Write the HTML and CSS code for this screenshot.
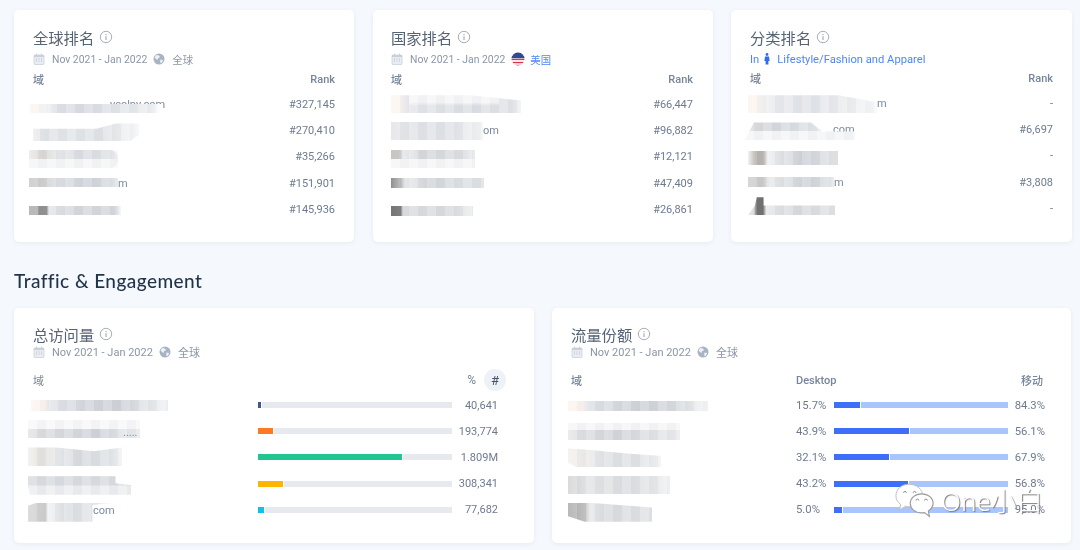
FILE: index.html
```html
<!DOCTYPE html>
<html lang="zh">
<head>
<meta charset="utf-8">
<title>Traffic &amp; Engagement</title>
<link rel="stylesheet" href="styles.css">
</head>
<body>
<svg class="defs" width="0" height="0">
  <symbol id="info" viewBox="0 0 14 14"><circle cx="7" cy="7" r="5.7" fill="none" stroke="currentColor" stroke-width="1"/><rect x="6.4" y="6.2" width="1.2" height="3.8" fill="currentColor"/><rect x="6.4" y="4" width="1.2" height="1.2" fill="currentColor"/></symbol>
  <symbol id="cal" viewBox="0 0 12 12"><rect x="1" y="2" width="10" height="9.5" rx="1" fill="#e9edf2" stroke="#c9d0da" stroke-width=".8"/><rect x="1" y="2" width="10" height="2" fill="#c9d0da"/><rect x="3" y=".6" width="1" height="2.2" fill="#c9d0da"/><rect x="8" y=".6" width="1" height="2.2" fill="#c9d0da"/><path d="M3 6h1M5.5 6h1M8 6h1M3 8h1M5.5 8h1M8 8h1" stroke="#b9c2ce" stroke-width="1"/></symbol>
  <symbol id="globe" viewBox="0 0 12 12"><circle cx="6" cy="6" r="5.5" fill="#a9b4c2"/><path d="M3 2l3 .6 1 1.6-2 1-.4 1.8-1.6-1L1.6 4.6zM7.5 6.5l2.600.5-1 2.600-1.500.6-.5-2z" fill="#eef1f5"/></symbol>
  <symbol id="flag" viewBox="0 0 14 14"><clipPath id="fc"><circle cx="7" cy="7" r="6.500"/></clipPath><g clip-path="url(#fc)"><rect width="14" height="14" fill="#fff"/><path d="M0 1.500h14M0 4.500h14M0 7.500h14M0 10.500h14M0 13.500h14" stroke="#d8344a" stroke-width="1.500"/><rect width="14" height="6.200" fill="#2f4a8f"/><path d="M0 9h14" stroke="#fff" stroke-width="1.200"/></g></symbol>
  <symbol id="person" viewBox="0 0 6 12"><circle cx="3" cy="1.500" r="1.400" fill="#2f6bf2"/><path d="M1 3.500h4l.6 4.500H4.400v3.500H1.600V8H.4z" fill="#2f6bf2"/></symbol>
</svg>

<main class="page">
  <section class="grid-three">
    <article class="card rank-card">
      <h3 class="title">全球排名<svg class="info"><use href="#info"/></svg></h3>
      <p class="meta"><svg class="ic"><use href="#cal"/></svg><span>Nov 2021 - Jan 2022</span><svg class="ic"><use href="#globe"/></svg><span>全球</span></p>
      <div class="head rank-row"><span>域</span><span>Rank</span></div>
      <div class="rank-row"><span class="dom"><span class="tail t-a1">ycolpy.com</span><i class="blur a1"></i></span><span>#327,145</span></div>
      <div class="rank-row"><span class="dom"><span class="tail t-a2">m</span><i class="blur a2"></i></span><span>#270,410</span></div>
      <div class="rank-row"><span class="dom"><i class="blur a3"></i></span><span>#35,266</span></div>
      <div class="rank-row"><span class="dom"><span class="tail t-a4">m</span><i class="blur a4"></i></span><span>#151,901</span></div>
      <div class="rank-row"><span class="dom"><i class="blur a5"></i></span><span>#145,936</span></div>
    </article>

    <article class="card rank-card">
      <h3 class="title">国家排名<svg class="info"><use href="#info"/></svg></h3>
      <p class="meta"><svg class="ic"><use href="#cal"/></svg><span>Nov 2021 - Jan 2022</span><svg class="ic flagic"><use href="#flag"/></svg><span class="link">美国</span></p>
      <div class="head rank-row"><span>域</span><span>Rank</span></div>
      <div class="rank-row"><span class="dom"><i class="blur b1"></i></span><span>#66,447</span></div>
      <div class="rank-row"><span class="dom"><span class="tail t-b2">om</span><i class="blur b2"></i></span><span>#96,882</span></div>
      <div class="rank-row"><span class="dom"><i class="blur b3"></i></span><span>#12,121</span></div>
      <div class="rank-row"><span class="dom"><i class="blur b4"></i></span><span>#47,409</span></div>
      <div class="rank-row"><span class="dom"><i class="blur b5"></i></span><span>#26,861</span></div>
    </article>

    <article class="card rank-card shifted">
      <h3 class="title">分类排名<svg class="info"><use href="#info"/></svg></h3>
      <p class="meta link"><span>In</span><svg class="person"><use href="#person"/></svg><span>Lifestyle/Fashion and Apparel</span></p>
      <div class="head rank-row"><span>域</span><span>Rank</span></div>
      <div class="rank-row"><span class="dom"><span class="tail t-c1">m</span><i class="blur c1"></i></span><span>-</span></div>
      <div class="rank-row"><span class="dom"><span class="tail t-c2">.com</span><i class="blur c2"></i></span><span>#6,697</span></div>
      <div class="rank-row"><span class="dom"><i class="blur c3"></i></span><span>-</span></div>
      <div class="rank-row"><span class="dom"><span class="tail t-c4">m</span><i class="blur c4"></i></span><span>#3,808</span></div>
      <div class="rank-row"><span class="dom"><i class="blur c5"></i></span><span>-</span></div>
    </article>
  </section>

  <h2 class="section-title">Traffic &amp; Engagement</h2>

  <section class="grid-two">
    <article class="card bar-card visits">
      <h3 class="title">总访问量<svg class="info"><use href="#info"/></svg></h3>
      <p class="meta"><svg class="ic"><use href="#cal"/></svg><span>Nov 2021 - Jan 2022</span><svg class="ic"><use href="#globe"/></svg><span>全球</span></p>
      <div class="head visit-head"><span>域</span><span class="pct-toggle">%</span><span class="hash">#</span></div>
      <div class="visit-row"><span class="dom"><i class="blur d1"></i></span><span class="track"><b class="fill navy" style="width:2%"></b></span><span class="num">40,641</span></div>
      <div class="visit-row"><span class="dom"><i class="blur d2"></i><span class="tail t-d2">.....</span></span><span class="track"><b class="fill orange" style="width:8.500%"></b></span><span class="num">193,774</span></div>
      <div class="visit-row"><span class="dom"><i class="blur d3"></i></span><span class="track"><b class="fill green" style="width:74.700%"></b></span><span class="num">1.809M</span></div>
      <div class="visit-row"><span class="dom"><i class="blur d4"></i></span><span class="track"><b class="fill yellow" style="width:13.300%"></b></span><span class="num">308,341</span></div>
      <div class="visit-row"><span class="dom"><span class="tail t-d5">.com</span><i class="blur d5"></i></span><span class="track"><b class="fill cyan" style="width:3.500%"></b></span><span class="num">77,682</span></div>
    </article>

    <article class="card bar-card share">
      <h3 class="title">流量份额<svg class="info"><use href="#info"/></svg></h3>
      <p class="meta"><svg class="ic"><use href="#cal"/></svg><span>Nov 2021 - Jan 2022</span><svg class="ic"><use href="#globe"/></svg><span>全球</span></p>
      <div class="head share-row share-head"><span>域</span><span class="desk">Desktop</span><span class="mob">移动</span></div>
      <div class="share-row"><span class="dom"><i class="blur e1"></i></span><span>15.7%</span><span class="split"><b class="fill blue" style="width:15.700%"></b></span><span class="num">84.3%</span></div>
      <div class="share-row"><span class="dom"><i class="blur e2"></i></span><span>43.9%</span><span class="split"><b class="fill blue" style="width:43.900%"></b></span><span class="num">56.1%</span></div>
      <div class="share-row"><span class="dom"><i class="blur e3"></i></span><span>32.1%</span><span class="split"><b class="fill blue" style="width:32.100%"></b></span><span class="num">67.9%</span></div>
      <div class="share-row"><span class="dom"><i class="blur e4"></i></span><span>43.2%</span><span class="split"><b class="fill blue" style="width:43.200%"></b></span><span class="num">56.8%</span></div>
      <div class="share-row"><span class="dom"><i class="blur e5"></i></span><span>5.0%</span><span class="split"><b class="fill blue" style="width:5%"></b></span><span class="num">95.0%</span></div>
    </article>
  </section>
</main>

<div class="watermark">
  <svg class="wm-icon" viewBox="0 0 44 38">
    <path d="M16 2C8 2 2 7 2 14c0 4 2 7 5 9l-1 6 6-4c1 .3 3 .5 4 .5 8 0 14-5 14-11.500S24 2 16 2z" fill="#fff" stroke="#bdbdbd" stroke-width="1"/>
    <path d="M29 12c-7 0-12 4.500-12 10s5 10 12 10c1 0 2 0 3-.3l5 4-1-5.700c3-2 5-4.500 5-8 0-5.500-5-10-12-10z" fill="#fff" stroke="#9c9c9c" stroke-width="1.200"/>
    <path d="M10 11a1.500 1.500 0 0 1 3 0M20 11a1.500 1.500 0 0 1 3 0M23 19a1.500 1.500 0 0 1 3 0M32 19a1.500 1.500 0 0 1 3 0" fill="none" stroke="#8a8a8a" stroke-width="1"/>
  </svg>
  <span class="wm-text">One小白</span>
</div>
</body>
</html>
```

FILE: styles.css
```css
* { box-sizing: border-box; }
html, body { margin: 0; height: 100%; }
body {
  width: 1080px;
  height: 550px;
  overflow: hidden;
  position: relative;
  background: #f5f8fd;
  font-family: Roboto, "Noto Sans CJK SC", sans-serif;
  font-size: 11px;
  color: #6d7b90;
  filter: blur(0.35px);
}
.defs { position: absolute; }
.page { padding: 10px 9px 0 14px; }

.grid-three { display: grid; grid-template-columns: 340px 340px 340px; column-gap: 19px; }
.grid-two { display: grid; grid-template-columns: 520px 519px; column-gap: 18px; }
.grid-three .card:last-child { margin-left: -1px; }
.grid-three .card:nth-child(2) { padding-left: 18px; padding-right: 20px; }

.card {
  background: #fff;
  border-radius: 5px;
  box-shadow: 0 1px 4px rgba(60, 80, 120, .08);
}
.rank-card { height: 232px; padding: 17px 19px 0; }
.bar-card { height: 235px; padding: 16px 19px 0; }
.visits { padding-right: 28px; }
.share { padding-right: 26px; }

.title {
  margin: 0;
  height: 22px;
  padding-bottom: 2px;
  display: flex;
  align-items: center;
  font: 400 15.300px/20px "Noto Sans CJK SC", sans-serif;
  color: #566375;
}
.info { width: 14px; height: 14px; margin-left: 5px; color: #a9afb8; }

.meta {
  margin: 2px 0 0;
  height: 16px;
  display: flex;
  align-items: center;
  color: #8a96a8;
  font-size: 10.400px;
  white-space: nowrap;
}
.bar-card .meta { margin-top: -2px; font-size: 11px; }
.ic { width: 12px; height: 12px; margin-right: 7px; flex: none; }
.meta span + .ic { margin-left: 6px; }
.flagic { width: 14px; height: 14px; margin-right: 5px; }
.link { color: #4f86f7; }
.meta.link { color: #4f86f7; font-size: 11.200px; }
.person { width: 6px; height: 12px; margin: 0 7px 0 5px; }

.rank-row {
  display: flex;
  justify-content: space-between;
  align-items: center;
  height: 26.300px;
  font-size: 11px;
}
.head { color: #76859a; font-weight: 500; font-size: 11px; }
.rank-row.head { height: 16px; margin: 4px 0 4px; }
.shifted .rank-row.head { margin: 3px 0 4px; }

/* zero-height anchor on the row's centre line: masks and tails hang off it */
.dom { position: relative; display: block; width: 140px; height: 0; }
.blur { position: absolute; display: block; filter: blur(.5px); }
.blur::after {
  content: "";
  position: absolute;
  inset: 0;
  background: repeating-linear-gradient(90deg, rgba(255, 255, 255, .16) 0 9px, rgba(120, 130, 145, .04) 9px 18px);
}
.tail { position: absolute; top: 0; transform: translateY(-50%); color: #7c8a9d; white-space: nowrap; }
.t-a1 { left: 77px; }
.t-a2 { left: 96px; top: 2px; }

/* Pixelated privacy masks over the domain names */
.a1 { left: -3px; top: -4px; width: 132px; height: 13px; background: linear-gradient(90deg, #fdf4ee, #f7f7f8 16px, #dfe2e7 24px, #d9dce2 55px, #e1e4e8 85px, #eceef1 120px, #fff); clip-path: polygon(0 30%, 100% 30%, 100% 100%, 0 100%); }
.a2 { left: -2px; top: -7px; width: 109px; height: 18px; background: linear-gradient(90deg, #eeeeef, #e2e3e6 15px, #e3e6ea 40px, #dfe2e6 70px, #f2f3f5 100px, #fff); clip-path: polygon(2% 30%, 60% 30%, 78% 0, 100% 0, 100% 60%, 90% 100%, 2% 100%); }
.a3 { left: -4px; top: -7px; width: 89px; height: 18px; background: linear-gradient(#0000 50%, #f5f6f7 50%), linear-gradient(90deg, #ece9e7, #d9d7d4 14px, #e6e8ea 30px, #dadde2 50px, #dfe2e6 80px, #f3f4f5); border-radius: 0 8px 8px 0; }
.a4 { left: -4px; top: -5px; width: 89px; height: 9px; background: linear-gradient(90deg, #c9c9c9, #cfcfcf 14px, #dcdfe4 30px, #cfd4db 60px, #d8dbe0 80px, #eef0f2); }
.t-a4 { left: 85px; }
.a5 { left: -4px; top: -3px; width: 92px; height: 9px; background: linear-gradient(90deg, #acacac, #acacac 9px, #8f8f8f 10px, #929292 18px, #e4e6e9 20px, #d5d8dd 45px, #d4d7dc 85px, #f5f6f7); }

.b1 { left: 0; top: -9px; width: 130px; height: 18px; background: linear-gradient(#f6f6f7 40%, #0000 60%) 18px 0 / 90px 100% no-repeat, linear-gradient(90deg, #fdf4ee, #fbf5f1 8px, #e4e6ea 20px, #dcdfe4 80px, #e2e4e8 120px, #f0f1f3); clip-path: polygon(0 0, 60% 0, 100% 30%, 100% 100%, 0 100%); }
.b2 { left: 0; top: -8px; width: 92px; height: 18px; background: linear-gradient(90deg, #e3e3e4, #e6e7e9 9px, #e1e3e7 30px, #e0e3e7 60px, #f4f5f6); }
.t-b2 { left: 92px; }
.b3 { left: 0; top: -7px; width: 84px; height: 18px; background: linear-gradient(#0000 50%, #f6f6f7 50%), linear-gradient(90deg, #bdbbb9, #bdbbb9 8px, #eeeff1 12px, #d5d8dc 30px, #dcdfe2 75px, #eff0f2); }
.b4 { left: 0; top: -5px; width: 93px; height: 10px; background: linear-gradient(90deg, #7b7b7b, #a9a9a9 8px, #e9eaec 14px, #d2d5da 40px, #dde0e4 70px, #dfe1e4); }
.b5 { left: 0; top: -3px; width: 82px; height: 10px; background: linear-gradient(90deg, #5a5a5a, #666 9px, #dcdde0 12px, #d9dbdf 60px, #ecedef); }

.c1 { left: -2px; top: -8px; width: 129px; height: 18px; background: linear-gradient(90deg, #fdf5ef, #f8f4f1 12px, #e9ebee 25px, #e1e4e8 60px, #eceef0 100px, #f8f8f9); clip-path: polygon(0 0, 70% 0, 100% 40%, 100% 100%, 0 100%); }
.t-c1 { left: 127px; }
.c2 { left: -5px; top: -7px; width: 110px; height: 18px; background: linear-gradient(#0000 50%, #f5f6f7 50%), linear-gradient(90deg, #e2e2e3, #d9d9da 15px, #d5d8dd 30px, #dfe2e6 65px, #f0f1f3); clip-path: polygon(8% 0, 60% 0, 70% 50%, 100% 50%, 100% 100%, 0 100%); }
.t-c2 { left: 80px; }
.c3 { left: -2px; top: -5px; width: 90px; height: 14px; background: linear-gradient(90deg, #f0efee, #b7b3ae 7px, #b9b5b1 15px, #eeeff0 20px, #ced1d6 55px, #e1e3e6 85px); }
.c4 { left: -2px; top: -5px; width: 86px; height: 10px; background: linear-gradient(90deg, #cfcfcf, #c9c9c9 14px, #e8e9eb 22px, #cfd3d8 60px, #dcdfe2 80px, #f0f1f2); }
.t-c4 { left: 84px; }
.c5 { left: -2px; top: -11px; width: 87px; height: 18px; background: linear-gradient(90deg, #e5e5e5, #d5d5d5 6px, #727272 8px, #6f6f6f 15px, #e6e7e9 18px, #d7dade 50px, #e0e2e5 85px); clip-path: polygon(8% 45%, 10% 0, 18% 0, 18% 45%, 100% 45%, 100% 100%, 0 100%); }

.visit-head { display: flex; align-items: center; height: 22px; margin: 9px 0 1px 0; font-weight: 400; }
.visit-head > span:first-child { flex: 1; }
.pct-toggle { font-size: 12px; margin-right: 8px; color: #76859a; }
.hash {
  width: 22px;
  height: 22px;
  border-radius: 50%;
  background: #eef2f7;
  display: flex;
  align-items: center;
  justify-content: center;
  color: #45546b;
  font-size: 13px;
}
.visit-row { display: grid; grid-template-columns: 225px 194px 46px; align-items: center; height: 26.200px; font-size: 11px; }
.num { text-align: right; }
.track { display: block; height: 6px; background: #e6e9ee; }
.split { display: block; height: 6px; background: #a8c5fc; }
.fill { display: block; height: 100%; border-right: 1px solid #fff; }
.navy { background: #3f5597; }
.orange { background: #fd7a23; }
.green { background: #1fc690; }
.yellow { background: #ffb400; }
.cyan { background: #12bfe5; }
.blue { background: #3d6ffb; }

.d1 { left: -2px; top: -5px; width: 137px; height: 11px; background: linear-gradient(90deg, #fdf5f0, #fbf3ee 14px, #e2e4e9 20px, #d2d5db 60px, #cfd2d8 90px, #dfe1e5 110px, #f1f2f4); }
.d2 { left: -5px; top: -11px; width: 112px; height: 18px; background: linear-gradient(#f8f8f9 50%, #0000 50%), linear-gradient(90deg, #e5e5e6, #dcdcde 12px, #d5d8dd 50px, #cfd3d9 70px, #e6e8eb 100px, #e9eaec); }
.t-d2 { left: 90px; top: 1px; }
.d3 { left: -5px; top: -10px; width: 94px; height: 19px; background: linear-gradient(90deg, #f2efed, #e5e2df 12px, #e8e9eb 30px, #d8dbdf 50px, #dfe2e5 80px, #f2f3f4); clip-path: polygon(0 0, 30% 0, 70% 20%, 100% 0, 100% 100%, 0 100%); }
.d4 { left: -5px; top: -8px; width: 103px; height: 19px; background: linear-gradient(#0000 0, #d9dce0 1px, #d9dce0 45%, #eceef0 55%), linear-gradient(90deg, #e4e4e4, #e7e8ea 30px, #dde0e4 50px, #eceef0 100px); clip-path: polygon(0 0, 85% 0, 85% 40%, 100% 50%, 100% 100%, 2% 100%, 0 60%); }
.d5 { left: -5px; top: -7px; width: 87px; height: 19px; background: linear-gradient(90deg, #d5d5d5, #cdcdcd 18px, #f1f2f3 20px, #dcdfe3 40px, #e2e4e7 60px, #f7f7f8); clip-path: polygon(0 15%, 10% 0, 100% 0, 74% 12%, 74% 100%, 0 100%); }
.t-d5 { left: 57px; }

.share-row { display: grid; grid-template-columns: 225px 38px 174px 37px; align-items: center; height: 26.200px; font-size: 11.300px; }
.share-row.share-head { height: 22px; margin: 9px 0 1px; font-size: 11px; font-weight: 500; }
.desk { grid-column: 2 / 4; }
.mob { justify-self: end; margin-right: 2px; }

.e1 { left: -3px; top: -4px; width: 140px; height: 10px; background: linear-gradient(90deg, #fdf4ee, #faf2ee 16px, #dfe2e6 20px, #cfd2d7 75px, #d8dbdf 110px, #f5f6f7); }
.e2 { left: -3px; top: -8px; width: 112px; height: 17px; background: linear-gradient(#f6f6f7 40%, #0000 40%), linear-gradient(90deg, #e8e8e9, #dedfe1 12px, #d2d5da 50px, #e2e4e7 90px, #eaebed); }
.e3 { left: -3px; top: -9px; width: 93px; height: 19px; background: linear-gradient(90deg, #f3f1ef, #ecebea 20px, #dfe2e5 40px, #e0e2e5 70px, #f2f3f4); clip-path: polygon(0 0, 25% 8%, 60% 25%, 100% 40%, 100% 100%, 10% 100%, 0 75%); }
.e4 { left: -3px; top: -8px; width: 102px; height: 18px; background: linear-gradient(90deg, #d3d3d3, #e4e5e6 18px, #dcdee1 60px, #e8e9eb 90px, #f3f4f5); }
.e5 { left: -3px; top: -7px; width: 84px; height: 19px; background: linear-gradient(90deg, #aaa, #c4c4c4 18px, #e7e8ea 22px, #d9dbde 40px, #e1e3e6 84px); clip-path: polygon(0 0, 25% 0, 100% 25%, 100% 100%, 20% 100%, 0 70%); }

.section-title {
  margin: 25px 0 13px;
  height: 28px;
  font: 500 19px/28px Lato, Inter, sans-serif;
  color: #1f3349;
  letter-spacing: .45px;
}

.watermark {
  position: absolute;
  left: 894px;
  top: 482px;
  display: flex;
  align-items: center;
  gap: 5px;
}
.wm-icon { width: 42px; height: 37px; }
.wm-text {
  font: 300 26px/30px "Noto Sans", "Noto Sans CJK SC", sans-serif;
  color: #fff;
  text-shadow: 1px 1px 1px #777;
}
```
